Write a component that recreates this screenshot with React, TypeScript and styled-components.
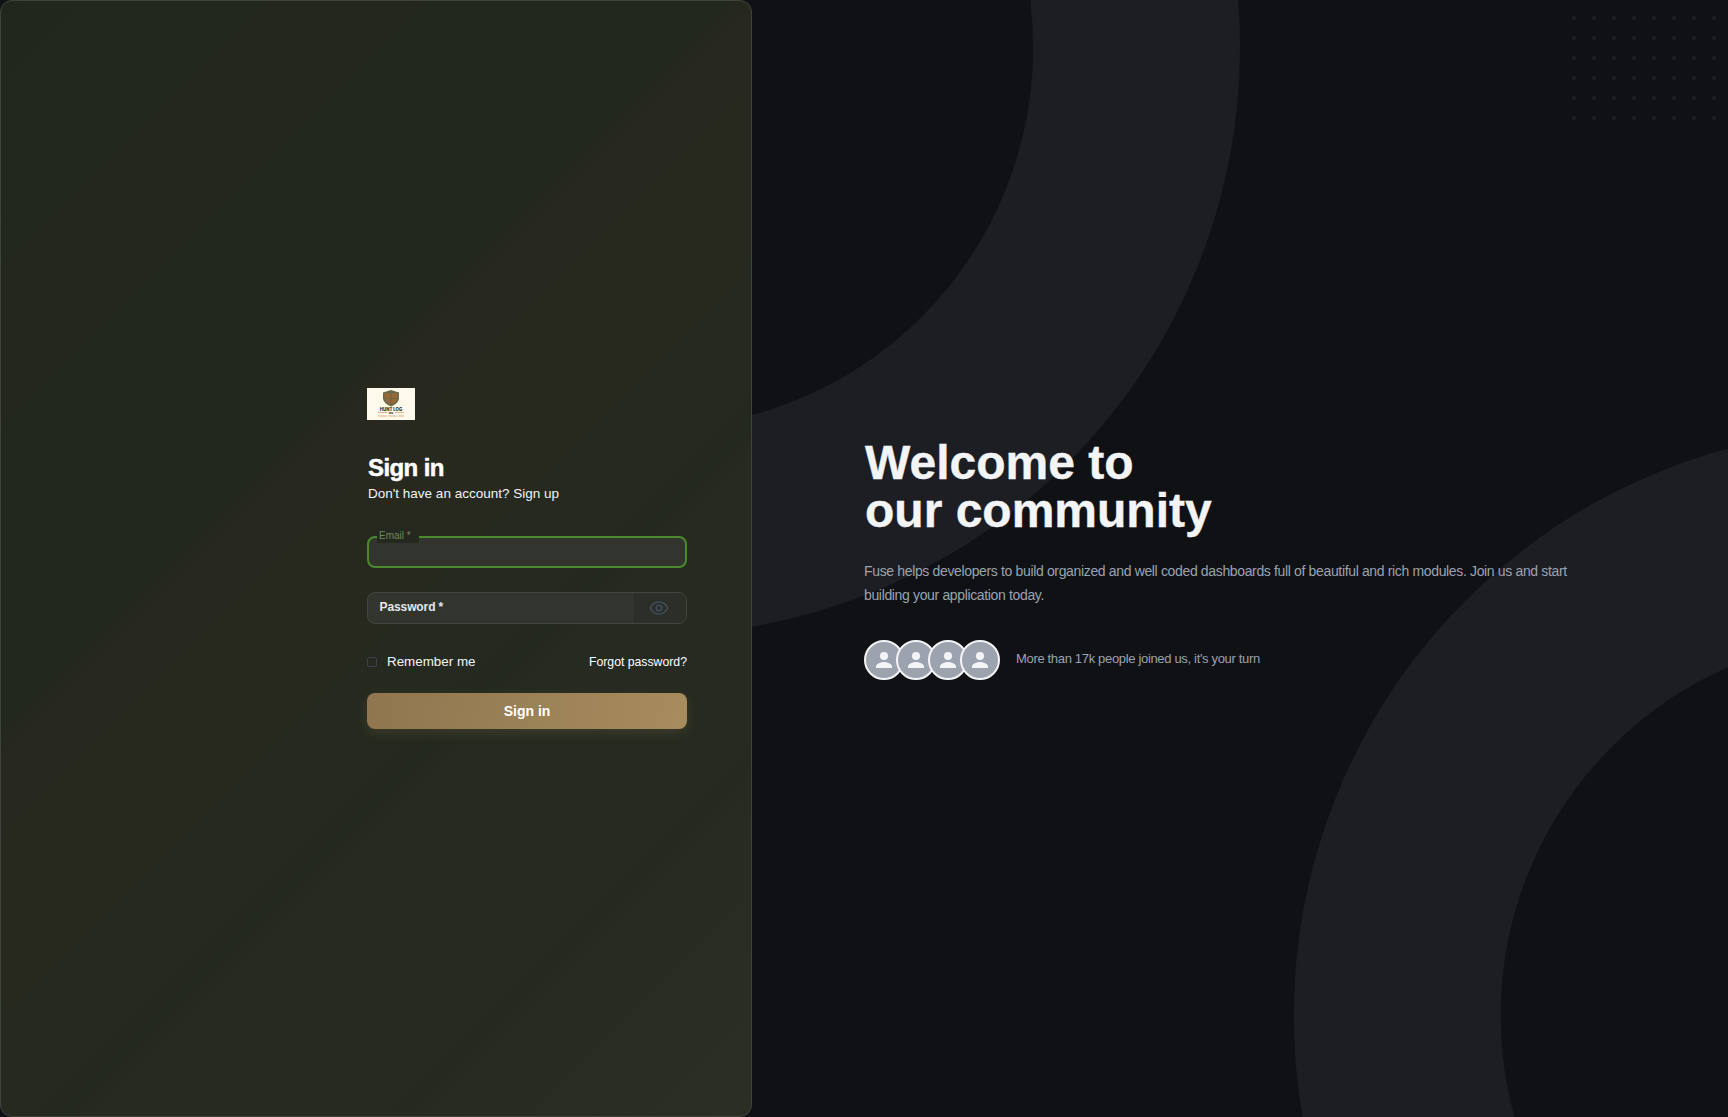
import React from 'react';
import styled, { createGlobalStyle } from 'styled-components';

const GlobalStyle = createGlobalStyle`
  * { box-sizing: border-box; }
  html, body { margin: 0; padding: 0; height: 100%; }
  body {
    background: #0f1115;
    font-family: "Liberation Sans", Arial, sans-serif;
    color: #fff;
  }
`;

const Page = styled.div`
  display: flex;
  width: 100%;
  height: 100vh;
  overflow: hidden;
`;

const FormPanel = styled.section`
  display: flex;
  flex: 0 0 752px;
  align-items: center;
  justify-content: flex-end;
  padding-right: 64px;
  border: 1px solid #3f443a;
  border-radius: 12px;
  background: linear-gradient(
    135deg,
    #20281d 0%,
    #21281d 14%,
    #24271d 15%,
    #24271d 22%,
    #22281e 23.5%,
    #22281e 39%,
    #27281f 40.5%,
    #27291f 52%,
    #25291f 60%,
    #24291f 63%,
    #262a20 64.5%,
    #272a21 80%,
    #25291f 81%,
    #282b22 82.5%,
    #2a2e25 100%
  );
`;

const FormBody = styled.div`
  display: flex;
  flex-direction: column;
  width: 320px;
`;

const Logo = styled.svg`
  display: block;
  width: 48px;
  height: 32px;
`;

const Title = styled.h1`
  margin: 32px 0 0 1px;
  font-size: 24px;
  line-height: 32px;
  font-weight: 700;
  letter-spacing: -0.6px;
  -webkit-text-stroke: 0.5px #fff;
  color: #fff;
`;

const Subtitle = styled.p`
  margin: 0 0 0 1px;
  font-size: 13.500px;
  line-height: 20px;
  color: #f3f4f6;
`;

const Fields = styled.form`
  display: flex;
  flex-direction: column;
  margin-top: 32px;
`;

const FieldBox = styled.div<{ $focused?: boolean }>`
  position: relative;
  display: flex;
  height: 32px;
  margin-bottom: 24px;
  border: ${(p) => (p.$focused ? '2px solid #4b8a2c' : '1px solid #41463e')};
  border-radius: 8px;
  background: #31352d;
`;

const FloatLabel = styled.span`
  position: absolute;
  top: -9px;
  left: 8px;
  padding: 0 8px 0 2px;
  background: #25281f;
  font-size: 10px;
  line-height: 14px;
  color: #6d8a5c;
`;

const PasswordLabel = styled.span`
  flex: 1;
  padding-left: 11.500px;
  font-size: 12px;
  line-height: 29px;
  font-weight: 700;
  letter-spacing: -0.1px;
  color: #e5e7eb;
`;

const EyeBox = styled.span`
  display: flex;
  flex: 0 0 52px;
  align-items: center;
  justify-content: center;
  padding-right: 2px;
  border-radius: 0 7px 7px 0;
  background: #2c2f28;
  color: #414c5c;
`;

const OptionsRow = styled.div`
  display: flex;
  align-items: center;
  justify-content: space-between;
  margin-top: 4px;
`;

const RememberLabel = styled.label`
  display: flex;
  align-items: center;
  gap: 10px;
  font-size: 13.400px;
  line-height: 20px;
  color: #f3f4f6;
`;

const CheckMark = styled.span`
  width: 10px;
  height: 10px;
  border: 1.500px solid #3a4250;
  border-radius: 2px;
`;

const ForgotLink = styled.a`
  font-size: 12.250px;
  line-height: 20px;
  color: #fff;
`;

const SubmitButton = styled.button`
  height: 36px;
  margin-top: 21px;
  border: 0;
  border-radius: 8px;
  background: linear-gradient(95deg, #8f7650 0%, #a78c5d 100%);
  box-shadow: 0 4px 12px rgba(166, 138, 90, 0.18);
  font-family: inherit;
  font-size: 14px;
  font-weight: 700;
  color: #fff;
`;

const HeroPanel = styled.section`
  position: relative;
  display: flex;
  flex: 1;
  align-items: center;
  padding: 2px 112px 0;
  overflow: hidden;
  background: #0f1115;
`;

const Rings = styled.svg`
  position: absolute;
  inset: 0;
  width: 100%;
  height: 100%;
  color: #1c1e23;
`;

const DotGrid = styled.svg`
  position: absolute;
  top: -64px;
  right: -64px;
  color: #1a1c20;
`;

const HeroBody = styled.div`
  position: relative;
  width: 100%;
`;

const Headline = styled.h2`
  margin: 0 0 0 1px;
  font-size: 48px;
  line-height: 48px;
  font-weight: 700;
  -webkit-text-stroke: 0.4px #f3f4f6;
  color: #f3f4f6;
`;

const Lead = styled.p`
  max-width: 720px;
  margin: 24px 0 0;
  font-size: 14px;
  line-height: 24px;
  letter-spacing: -0.35px;
  color: #9ca3af;
`;

const SocialRow = styled.div`
  display: flex;
  align-items: center;
  margin-top: 33px;
`;

const AvatarStack = styled.div`
  display: flex;
`;

const Avatar = styled.span`
  display: flex;
  align-items: center;
  justify-content: center;
  width: 40px;
  height: 40px;
  margin-right: -8px;
  border: 2px solid #f3f4f6;
  border-radius: 50%;
  background: #9ca3af;
  color: #f3f4f6;
`;

const SocialText = styled.span`
  position: relative;
  top: -1px;
  margin-left: 24px;
  font-size: 13px;
  line-height: 20px;
  letter-spacing: -0.33px;
  color: #9ca3af;
`;

const HuntLogLogo = () => (
  <Logo viewBox="0 0 48 32" aria-label="Hunt Log">
    <rect width="48" height="32" fill="#fff9ec" />
    <path d="M16 4.500 L24 2 L32 4.500 L32 11 Q31 15.500 24 18.500 Q17 15.500 16 11 Z" fill="#6b6a48" />
    <path d="M17.500 5.500 H23.300 V10 H17.500 Z M24.700 5.500 H30.500 V10 H24.700 Z M18 11 H23.300 V16.500 Q19 14.500 18 11 Z M24.700 11 H30 Q29 14.500 24.700 16.500 Z" fill="#9a6a35" />
    <text x="24" y="22.500" textAnchor="middle" fontFamily="Inter, sans-serif" fontSize="4.300" fontWeight="800" fill="#2d3320">HUNT LOG</text>
    <path d="M11 24.400 H20 M28 24.400 H37" stroke="#d98a50" strokeWidth="0.700" />
    <text x="24" y="26.200" textAnchor="middle" fontFamily="Inter, sans-serif" fontSize="2.600" fontWeight="800" fill="#2d3320">INC</text>
    <path d="M11 28 H37" stroke="#e3a06e" strokeWidth="0.800" strokeDasharray="9 1" />
  </Logo>
);

const PersonIcon = () => (
  <svg width="24" height="24" viewBox="0 0 24 24" fill="currentColor" aria-hidden="true">
    <circle cx="12" cy="8" r="4" />
    <path d="M4 20v-1.600C4 15.600 9.300 14 12 14s8 1.600 8 4.400V20H4z" />
  </svg>
);

const EyeIcon = () => (
  <svg width="22" height="22" viewBox="0 0 24 24" fill="none" stroke="currentColor" strokeWidth="1.700" aria-hidden="true">
    <path d="M2.500 12C4.500 7.800 8 5.500 12 5.500s7.500 2.300 9.500 6.500c-2 4.200-5.500 6.500-9.500 6.500S4.500 16.200 2.500 12z" />
    <circle cx="12" cy="12" r="3" />
  </svg>
);

export default function App() {
  return (
    <>
      <GlobalStyle />
      <Page>
        <FormPanel>
          <FormBody>
            <HuntLogLogo />
            <Title>Sign in</Title>
            <Subtitle>Don't have an account? Sign up</Subtitle>
            <Fields>
              <FieldBox $focused>
                <FloatLabel>Email *</FloatLabel>
              </FieldBox>
              <FieldBox>
                <PasswordLabel>Password *</PasswordLabel>
                <EyeBox>
                  <EyeIcon />
                </EyeBox>
              </FieldBox>
              <OptionsRow>
                <RememberLabel>
                  <CheckMark />
                  Remember me
                </RememberLabel>
                <ForgotLink>Forgot password?</ForgotLink>
              </OptionsRow>
              <SubmitButton type="button">Sign in</SubmitButton>
            </Fields>
          </FormBody>
        </FormPanel>
        <HeroPanel>
          <Rings viewBox="0 0 960 540" preserveAspectRatio="xMidYMax slice" aria-hidden="true">
            <g fill="none" stroke="currentColor" strokeWidth="100">
              <circle r="234" cx="196" cy="23" />
              <circle r="234" cx="790" cy="491" />
            </g>
          </Rings>
          <DotGrid width="220" height="192" viewBox="0 0 220 192" fill="none" aria-hidden="true">
            <defs>
              <pattern id="dots" x="0" y="0" width="20" height="20" patternUnits="userSpaceOnUse">
                <rect width="4" height="4" fill="currentColor" />
              </pattern>
            </defs>
            <rect width="220" height="192" fill="url(#dots)" />
          </DotGrid>
          <HeroBody>
            <Headline>
              Welcome to
              <br />
              our community
            </Headline>
            <Lead>
              Fuse helps developers to build organized and well coded dashboards full of beautiful and rich modules. Join us and start building your application today.
            </Lead>
            <SocialRow>
              <AvatarStack>
                <Avatar><PersonIcon /></Avatar>
                <Avatar><PersonIcon /></Avatar>
                <Avatar><PersonIcon /></Avatar>
                <Avatar><PersonIcon /></Avatar>
              </AvatarStack>
              <SocialText>More than 17k people joined us, it's your turn</SocialText>
            </SocialRow>
          </HeroBody>
        </HeroPanel>
      </Page>
    </>
  );
}
